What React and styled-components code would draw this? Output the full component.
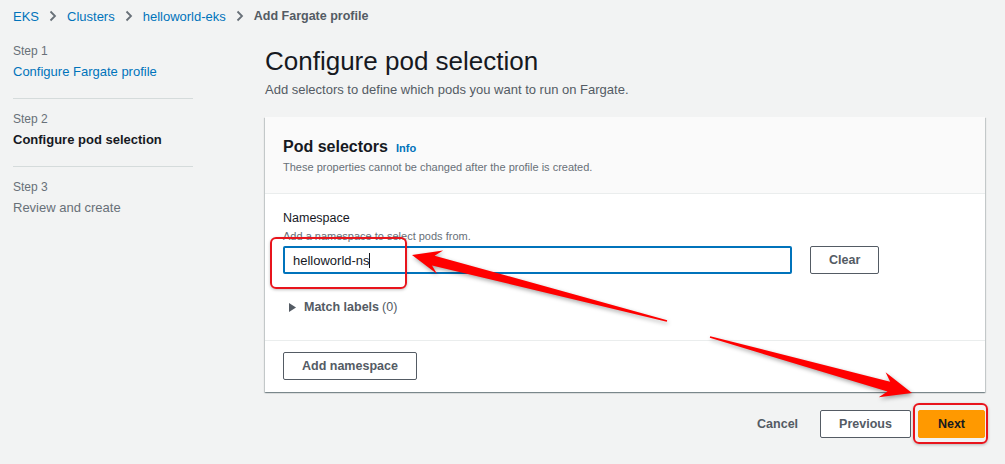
import React from "react";
import styled, { createGlobalStyle } from "styled-components";

const GlobalStyle = createGlobalStyle`
  html, body {
    margin: 0;
    padding: 0;
    background: #f2f3f3;
  }
  body {
    font-family: "Liberation Sans", Arial, sans-serif;
    color: #16191f;
    width: 1005px;
    height: 464px;
    overflow: hidden;
  }
`;

const Page = styled.div`
position: relative;
padding: 6px 20px 0 13px;
`

const Breadcrumbs = styled.nav`
display: flex;
align-items: center;
height: 20px;
font-size: 13px;
`
const Crumb = styled.a`
color: #0073bb;
text-decoration: none;
`
const CrumbCurrent = styled.span`
color: #545b64;
font-weight: bold;
font-size: 12.5px;
`
const ChevronWrap = styled.span`
display: flex;
align-items: center;
margin: 0 10px 0 10px;
`

const Layout = styled.div`
display: grid;
grid-template-columns: 180px 720px;
column-gap: 72px;
margin-top: 17px;
`

const StepNav = styled.ul`
list-style: none;
margin: 0;
padding: 0;
`
const StepItem = styled.li`
padding: ${p => (p.$first ? "0" : "12px")} 0 16px;
border-bottom: ${p => (p.$last ? "none" : "1px solid #d5dbdb")};
`
const StepLabel = styled.div`
font-size: 12px;
line-height: 16px;
color: #687078;
margin-bottom: 3px;
`
const StepName = styled.div`
font-size: 13px;
line-height: 20px;
color: ${p => (p.$state === "done" ? "#0073bb" : p.$state === "current" ? "#16191f" : "#687078")};
font-weight: ${p => (p.$state === "current" ? "bold" : "normal")};
`

const Main = styled.main`
display: flex;
flex-direction: column;
padding-top: 2px;
`
const Title = styled.h1`
margin: 0;
font-size: 26px;
line-height: 32px;
font-weight: normal;
color: #16191f;
`
const Subtitle = styled.p`
margin: 3px 0 0;
font-size: 13px;
line-height: 20px;
color: #545b64;
`

const Card = styled.section`
margin-top: 17px;
background: #fff;
box-shadow: 0 1px 1px 0 rgba(0, 28, 36, 0.3), 1px 1px 1px 0 rgba(0, 28, 36, 0.15), -1px 1px 1px 0 rgba(0, 28, 36, 0.15);
`
const CardHeader = styled.header`
background: #fafafa;
border-bottom: 1px solid #eaeded;
padding: 19px 18px 18px;
`
const CardTitle = styled.h2`
display: flex;
align-items: baseline;
margin: 0;
font-size: 16px;
line-height: 22px;
font-weight: bold;
`
const InfoLink = styled.a`
margin-left: 8px;
font-size: 11px;
font-weight: bold;
color: #0073bb;
text-decoration: none;
`
const CardDesc = styled.p`
margin: 0;
font-size: 11px;
line-height: 16px;
color: #687078;
`
const CardBody = styled.div`
padding: 14px 18px 23px;
border-bottom: 1px solid #eaeded;
`
const FieldLabel = styled.label`
display: block;
font-size: 12.5px;
line-height: 20px;
color: #16191f;
`
const FieldHint = styled.div`
font-size: 11px;
line-height: 16px;
color: #687078;
margin-bottom: 2px;
`
const FieldRow = styled.div`
display: flex;
align-items: center;
gap: 18px;
`
const InputWrap = styled.div`
position: relative;
width: 509px;
`
const TextInput = styled.div`
box-sizing: border-box;
height: 28px;
display: flex;
align-items: center;
padding: 0 8px;
border: 2px solid #0073bb;
border-radius: 2px;
font-size: 13px;
color: #16191f;
background: #fff;
`
const Caret = styled.span`
display: inline-block;
width: 1px;
height: 15px;
background: #16191f;
margin-left: -1px;
`
const Highlight = styled.span`
position: absolute;
top: ${p => p.$top}px;
left: ${p => p.$left}px;
right: ${p => p.$right}px;
bottom: ${p => p.$bottom}px;
border: 2px solid #e8141c;
border-radius: 6px;
box-shadow: 0 1px 3px rgba(0, 0, 0, 0.25);
pointer-events: none;
`

const Button = styled.button`
box-sizing: border-box;
height: 28px;
padding: 0 ${p => p.$pad || 18}px;
font-family: inherit;
font-size: 12.5px;
font-weight: bold;
color: ${p => (p.$primary ? "#16191f" : "#545b64")};
background: ${p => (p.$primary ? "#f90" : p.$link ? "transparent" : "#fff")};
border: 1px solid ${p => (p.$primary ? "#f90" : p.$link ? "transparent" : "#545b64")};
border-radius: 2px;
cursor: pointer;
`

const Expander = styled.div`
display: flex;
align-items: center;
margin-top: 23px;
padding-left: 5px;
font-size: 12.5px;
line-height: 20px;
color: #545b64;
`
const ExpanderTitle = styled.span`
font-weight: bold;
margin-left: 7px;
margin-right: 3px;
`

const CardFooter = styled.footer`
padding: 11px 18px 12px;
`

const Actions = styled.div`
display: flex;
justify-content: flex-end;
align-items: center;
gap: 7px;
margin-top: 18px;
`
const ButtonWrap = styled.div`
position: relative;
`

const Overlay = styled.svg`
position: absolute;
left: 0;
top: 0;
pointer-events: none;
filter: drop-shadow(1px 2px 2px rgba(0, 0, 0, 0.35));
`

const Chevron = () => (
  <ChevronWrap>
    <svg width="8" height="12" viewBox="0 0 8 12">
      <path d="M1.5 1.5 L6 6 L1.5 10.5" fill="none" stroke="#687078" strokeWidth="1.8" />
    </svg>
  </ChevronWrap>
);

const Triangle = () => (
  <svg width="9" height="11" viewBox="0 0 9 11">
    <path d="M1 1 L8 5.5 L1 10 Z" fill="#545b64" />
  </svg>
);

// tapered arrow shape, tail -> tip
const arrowPoints = (x1, y1, x2, y2, headLen, headHalf, shaftHalf) => {
  const len = Math.hypot(x2 - x1, y2 - y1);
  const ux = (x2 - x1) / len;
  const uy = (y2 - y1) / len;
  const nx = -uy;
  const ny = ux;
  const bx = x2 - ux * headLen;
  const by = y2 - uy * headLen;
  const jx = x2 - ux * (headLen - 7);
  const jy = y2 - uy * (headLen - 7);
  const pts = [
    [x1 + nx * 0.8, y1 + ny * 0.8],
    [jx + nx * shaftHalf, jy + ny * shaftHalf],
    [bx + nx * headHalf, by + ny * headHalf],
    [x2, y2],
    [bx - nx * headHalf, by - ny * headHalf],
    [jx - nx * shaftHalf, jy - ny * shaftHalf],
    [x1 - nx * 0.8, y1 - ny * 0.8],
  ];
  return pts.map(p => p.map(v => v.toFixed(1)).join(",")).join(" ");
};

const steps = [
  { label: "Step 1", name: "Configure Fargate profile", state: "done" },
  { label: "Step 2", name: "Configure pod selection", state: "current" },
  { label: "Step 3", name: "Review and create", state: "todo" },
];

const App = () => {
  return (
    <>
      <GlobalStyle />
      <Page>
        <Breadcrumbs>
          <Crumb href="#">EKS</Crumb>
          <Chevron />
          <Crumb href="#">Clusters</Crumb>
          <Chevron />
          <Crumb href="#">helloworld-eks</Crumb>
          <Chevron />
          <CrumbCurrent>Add Fargate profile</CrumbCurrent>
        </Breadcrumbs>

        <Layout>
          <StepNav>
            {steps.map((s, i) => (
              <StepItem key={s.label} $first={i === 0} $last={i === steps.length - 1}>
                <StepLabel>{s.label}</StepLabel>
                <StepName $state={s.state}>{s.name}</StepName>
              </StepItem>
            ))}
          </StepNav>

          <Main>
            <Title>Configure pod selection</Title>
            <Subtitle>Add selectors to define which pods you want to run on Fargate.</Subtitle>

            <Card>
              <CardHeader>
                <CardTitle>
                  Pod selectors <InfoLink href="#">Info</InfoLink>
                </CardTitle>
                <CardDesc>These properties cannot be changed after the profile is created.</CardDesc>
              </CardHeader>
              <CardBody>
                <FieldLabel>Namespace</FieldLabel>
                <FieldHint>Add a namespace to select pods from.</FieldHint>
                <FieldRow>
                  <InputWrap>
                    <TextInput>
                      helloworld-ns<Caret />
                    </TextInput>
                    <Highlight $top={-9} $left={-13} $right={385} $bottom={-15} />
                  </InputWrap>
                  <Button $pad={18}>Clear</Button>
                </FieldRow>
                <Expander>
                  <Triangle />
                  <ExpanderTitle>Match labels</ExpanderTitle>(0)
                </Expander>
              </CardBody>
              <CardFooter>
                <Button $pad={18}>Add namespace</Button>
              </CardFooter>
            </Card>

            <Actions>
              <Button $link $pad={14}>Cancel</Button>
              <Button $pad={18}>Previous</Button>
              <ButtonWrap>
                <Button $primary $pad={19}>Next</Button>
                <Highlight $top={-7} $left={-5} $right={-3} $bottom={-6} />
              </ButtonWrap>
            </Actions>
          </Main>
        </Layout>

        <Overlay width="1005" height="464" viewBox="0 0 1005 464">
          <polygon points={arrowPoints(667, 321, 412, 255, 29, 12, 5)} fill="#f00" />
          <polygon points={arrowPoints(710, 337, 912, 393, 31, 13, 5)} fill="#f00" />
        </Overlay>
      </Page>
    </>
  );
};

export default App;
